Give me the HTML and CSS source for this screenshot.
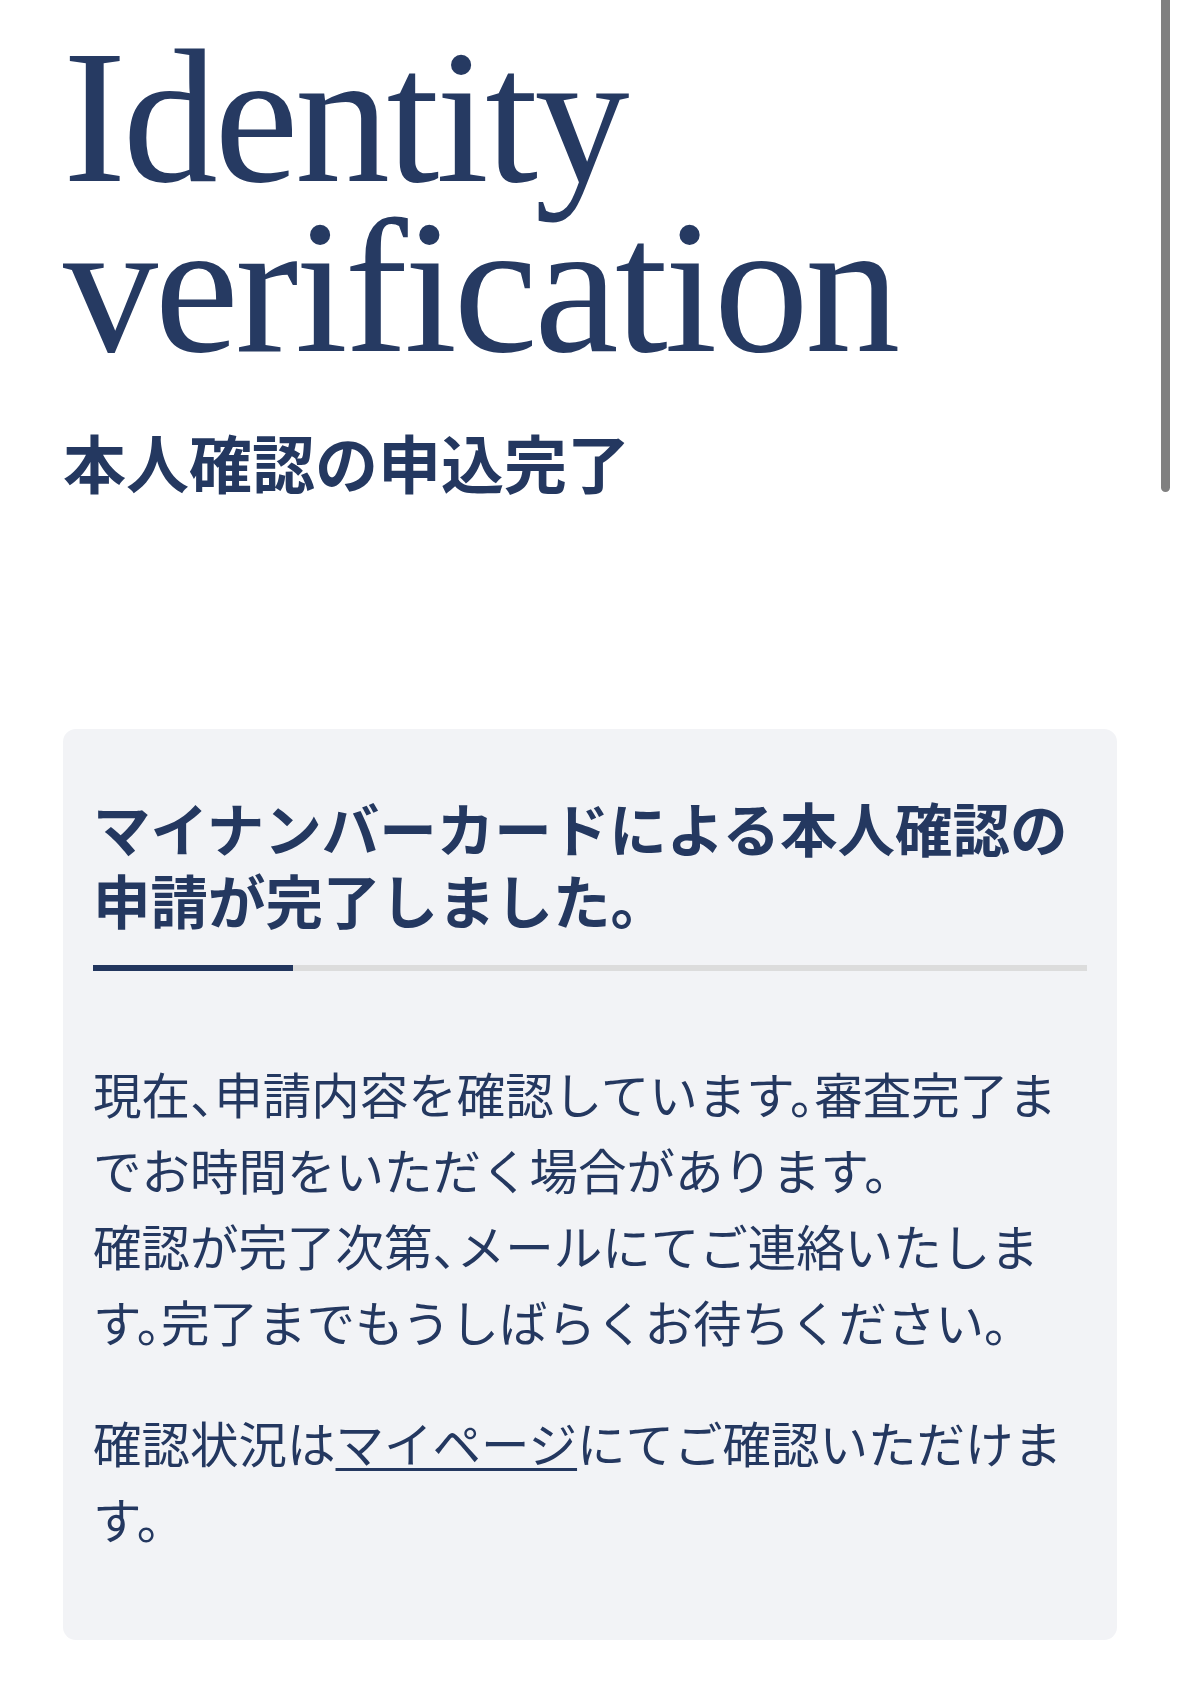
FILE: index.html
```html
<!DOCTYPE html>
<html lang="ja">
<head>
<meta charset="utf-8">
<title>Identity verification</title>
<link rel="stylesheet" href="styles.css">
</head>
<body>
<div class="scrollbar"></div>
<main class="page">
  <header class="page-head">
    <h1 class="title">Identity<br>verification</h1>
    <p class="subtitle">本人確認の申込完了</p>
  </header>
  <section class="card">
    <h2 class="card-title">マイナンバーカードによる本人確認の申請が完了しました。</h2>
    <div class="divider"><span class="divider-accent"></span></div>
    <p class="card-text">現在、申請内容を確認しています。審査完了までお時間をいただく場合があります。<br>確認が完了次第、メールにてご連絡いたします。完了までもうしばらくお待ちください。</p>
    <p class="card-text">確認状況は<a class="link" href="#">マイページ</a>にてご確認いただけます。</p>
  </section>
</main>
</body>
</html>
```
FILE: styles.css
```css
html, body {
  margin: 0;
  padding: 0;
  background: #ffffff;
}
body {
  color: #243860;
  font-family: "Noto Sans CJK JP", "Noto Sans", sans-serif;
}
.scrollbar {
  position: absolute;
  top: 0;
  right: 9px;
  width: 9px;
  height: 492px;
  border-radius: 0 0 5px 5px;
  background: #808080;
}
.page {
  padding: 32px 62px 40px 63px;
}
.page-head {
  display: flex;
  flex-direction: column;
}
.title {
  margin: 0;
  font-family: "Liberation Serif", "Times New Roman", serif;
  font-weight: 400;
  font-size: 190px;
  line-height: 170px;
  letter-spacing: -3.5px;
  color: #263a62;
}
.subtitle {
  margin: 43px 0 0;
  font-size: 63px;
  font-weight: 700;
  line-height: 92px;
}
.card {
  margin-top: 222px;
  background: #f2f3f6;
  border-radius: 13px;
  padding: 62px 30px 84px 30px;
}
.card-title {
  margin: 0;
  font-size: 57.5px;
  font-weight: 700;
  line-height: 72px;
}
.divider {
  margin-top: 30px;
  height: 6px;
  background: #dcdcdc;
  display: flex;
}
.divider-accent {
  width: 200px;
  height: 100%;
  background: #22365e;
}
.card-text {
  margin: 84px 0 0;
  font-size: 48.5px;
  font-weight: 400;
  line-height: 76px;
  font-feature-settings: "halt";
}
.card-text + .card-text {
  margin-top: 45px;
}
.link {
  color: inherit;
  text-decoration: underline;
  text-decoration-thickness: 3px;
  text-underline-offset: 5px;
}
```
